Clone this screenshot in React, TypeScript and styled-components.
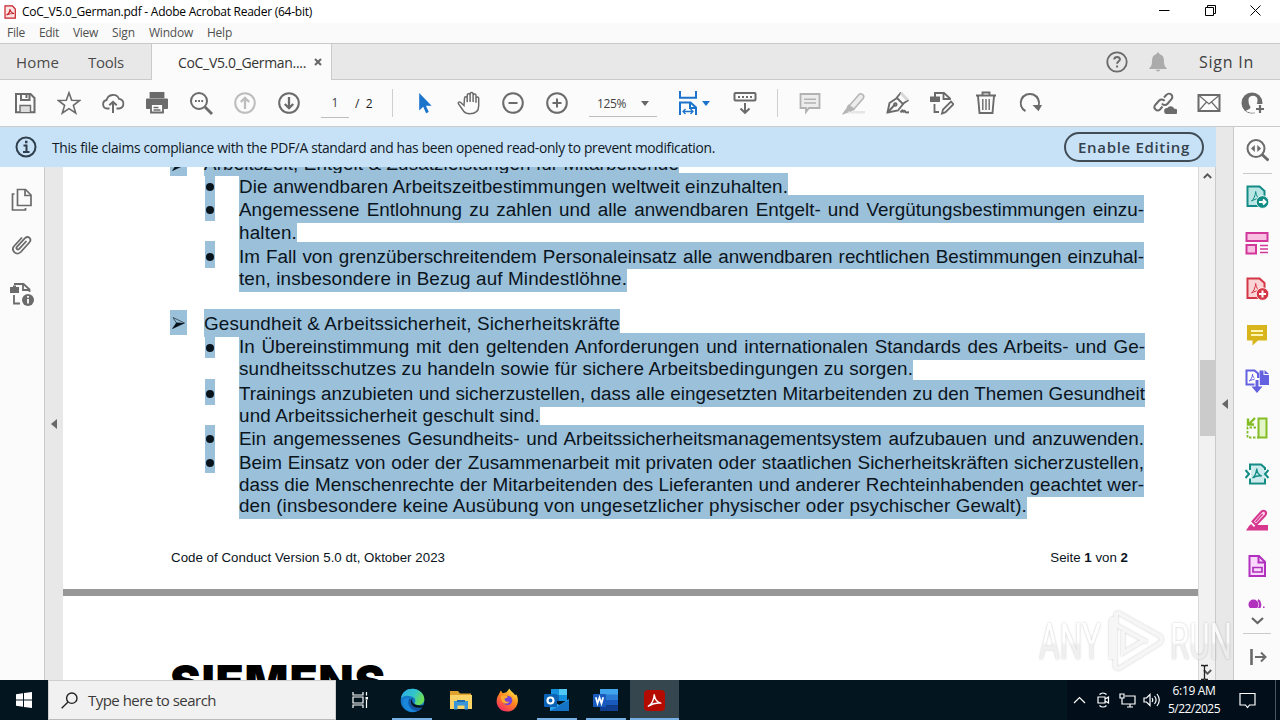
import React, { useLayoutEffect, useRef, useState } from 'react';
import styled, { createGlobalStyle } from 'styled-components';

type FitProps = { width: number; by?: 'letter' | 'word'; children: string };

function Fit({ width, by = 'letter', children }: FitProps) {
  const ref = useRef<HTMLSpanElement>(null);
  const [gap, setGap] = useState(0);

  useLayoutEffect(() => {
    const natural = ref.current!.getBoundingClientRect().width;
    const count = by === 'word' ? children.split(' ').length - 1 : children.length;
    setGap((width - natural) / Math.max(count, 1));
  }, []);

  return (
    <FitBox $width={width}>
      <span ref={ref} style={by === 'word' ? { wordSpacing: gap } : { letterSpacing: gap }}>
        {children}
      </span>
    </FitBox>
  );
}

const menus: [string, number][] = [
  ['File', 18],
  ['Edit', 20],
  ['View', 25],
  ['Sign', 23],
  ['Window', 44],
  ['Help', 25],
];

type Line = {
  text: string;
  width: number;
  height: number;
  pad: number;
  bullet?: [number, number, number];
  justify?: boolean;
};

// bullet: offset of the mark, its height, offset of the dot inside it
const workingTime: Line[] = [
  { text: 'Die anwendbaren Arbeitszeitbestimmungen weltweit einzuhalten.', width: 549, height: 22, pad: 3, bullet: [3, 23, 7] },
  { text: 'Angemessene Entlohnung zu zahlen und alle anwendbaren Entgelt- und Vergütungsbestimmungen einzu-', width: 905, height: 28, pad: 4, bullet: [0, 26, 11], justify: true },
  { text: 'halten.', width: 58, height: 19, pad: -1 },
  { text: 'Im Fall von grenzüberschreitendem Personaleinsatz alle anwendbaren rechtlichen Bestimmungen einzuhal-', width: 905, height: 27, pad: 4, bullet: [-1, 27, 12], justify: true },
  { text: 'ten, insbesondere in Bezug auf Mindestlöhne.', width: 388, height: 23, pad: -1 },
];

const safety: Line[] = [
  { text: 'In Übereinstimmung mit den geltenden Anforderungen und internationalen Standards des Arbeits- und Ge-', width: 906, height: 27, pad: 3, bullet: [4, 21, 7], justify: true },
  { text: 'sundheitsschutzes zu handeln sowie für sichere Arbeitsbedingungen zu sorgen.', width: 674, height: 20, pad: -2 },
  { text: 'Trainings anzubieten und sicherzustellen, dass alle eingesetzten Mitarbeitenden zu den Themen Gesundheit', width: 906, height: 27, pad: 3, bullet: [-1, 26, 11], justify: true },
  { text: 'und Arbeitssicherheit geschult sind.', width: 301, height: 18, pad: -2 },
  { text: 'Ein angemessenes Gesundheits- und Arbeitssicherheitsmanagementsystem aufzubauen und anzuwenden.', width: 905, height: 27, pad: 3, bullet: [0, 27, 10], justify: true },
  { text: 'Beim Einsatz von oder der Zusammenarbeit mit privaten oder staatlichen Sicherheitskräften sicherzustellen,', width: 905, height: 22, pad: 0, bullet: [0, 21, 7], justify: true },
  { text: 'dass die Menschenrechte der Mitarbeitenden des Lieferanten und anderer Rechteinhabenden geachtet wer-', width: 905, height: 23, pad: 0, justify: true },
  { text: 'den (insbesondere keine Ausübung von ungesetzlicher physischer oder psychischer Gewalt).', width: 788, height: 22, pad: -2 },
];

function Lines({ lines }: { lines: Line[] }) {
  return (
    <>
      {lines.map((line) => (
        <LineRow key={line.text} $height={line.height}>
          <BulletCell>
            {line.bullet && (
              <Bullet $shift={line.bullet[0]} $height={line.bullet[1]} $dot={line.bullet[2]}>
                <i />
              </Bullet>
            )}
          </BulletCell>
          <Marked $pad={line.pad}>
            <Fit width={line.width} by={line.justify ? 'word' : 'letter'}>
              {line.text}
            </Fit>
          </Marked>
        </LineRow>
      ))}
    </>
  );
}

const Arrow = () => (
  <svg width="17" height="25" viewBox="0 0 17 25">
    <path d="M3 7.5 14.5 13 2.5 18.5 6.5 13Z" fill="none" stroke="#1d2b35" strokeWidth=".7" />
    <path d="M6.5 12.6 14.5 13 2.5 18.7Z" fill="#06121c" />
  </svg>
);

type IconProps = { children: React.ReactNode; size?: number; color?: string; width?: number };

function Icon({ children, size = 24, color = '#6b6b6b', width = 1.8 }: IconProps) {
  return (
    <svg width={size} height={size} viewBox="0 0 24 24" fill="none" stroke={color} strokeWidth={width}>
      {children}
    </svg>
  );
}

const mark = 'M6.500 16c2-1.500 4-5.500 4.200-9.500 .3 4 2 6.500 5 7.500-3-.7-6 .2-9.200 2Z';

const SaveIcon = () => (
  <Icon width={2}>
    <path d="M3 3h14.500L21.500 7v14.200H3Z" />
    <path d="M8 3v6h8.500V3" />
    <path d="M13.500 4v3" />
    <path d="M7 21v-6.500h10.500V21" fill="#ddd" strokeWidth="1.400" />
  </Icon>
);
const StarIcon = () => (
  <Icon width={1.6}>
    <path d="m12 1.800 2.700 7.400 8 .3-6.300 4.900 2.300 7.600L12 17.600 5.300 22l2.300-7.600L1.300 9.500l8-.3Z" />
  </Icon>
);
const CloudIcon = () => (
  <Icon>
    <path d="M8.500 17.500H6A4.300 4.300 0 0 1 5.600 9 6.600 6.600 0 0 1 18 7.800a4.900 4.900 0 0 1 .3 9.700h-2.800" />
    <path d="M12 22V11M8.300 14.300 12 10.800l3.700 3.500" strokeWidth="2" />
  </Icon>
);
const PrintIcon = () => (
  <Icon>
    <path d="M5.500 1.800h13v4.500h-13Z" fill="#6b6b6b" />
    <path d="M1.500 8h21v9.500h-4V14h-13v3.500h-4Z" fill="#6b6b6b" strokeWidth="1" />
    <path d="M6 14v7.500h12V14" fill="#fff" />
    <path d="M8.500 16.500h5M8.500 19h7" strokeWidth="1.300" />
  </Icon>
);
const FindIcon = () => (
  <Icon width={2}>
    <circle cx="10" cy="10" r="8" />
    <path d="m16 16 7 7" strokeWidth="2.800" />
    <path d="M6 10h1.800M9.200 10H11M12.300 10h1.800" strokeWidth="2" />
  </Icon>
);
const UpIcon = () => (
  <Icon color="#bdbdbd" width={2}>
    <circle cx="12" cy="12" r="9.800" />
    <path d="M12 18V7M7.800 11 12 6.800l4.200 4.200" strokeWidth="2.300" />
  </Icon>
);
const DownIcon = () => (
  <Icon width={2}>
    <circle cx="12" cy="12" r="9.800" />
    <path d="M12 6v11M7.800 13l4.200 4.200 4.200-4.200" strokeWidth="2.300" />
  </Icon>
);
const PointerIcon = () => (
  <Icon>
    <path d="M6.200 2v17.500l4-3.800 2.900 6.500 2.700-1.200-2.900-6.300h5.700Z" fill="#1b73cc" stroke="none" />
  </Icon>
);
const HandIcon = () => (
  <Icon width={1.5}>
    <path d="M7 14.500 3.500 11.300c-1.500-1-2.800.5-1.800 1.800l5 7.200c1.200 1.600 3 2.500 6 2.500 6 0 9-3 9-8V7.300c0-1.900-2.700-1.900-2.700 0v4.500V4.500c0-2-2.900-2-2.900 0V11 3c0-2-3-2-3 0v8V4.300c0-2-2.900-2-2.900 0v7V7.200c0-2-2.700-2-2.700 0Z" />
  </Icon>
);
const MinusIcon = () => (
  <Icon width={2}>
    <circle cx="12" cy="12" r="9.800" />
    <path d="M7.500 12h9" strokeWidth="2" />
  </Icon>
);
const PlusIcon = () => (
  <Icon width={2}>
    <circle cx="12" cy="12" r="9.800" />
    <path d="M7.500 12h9M12 7.500v9" strokeWidth="2" />
  </Icon>
);
const FitPageIcon = () => (
  <Icon color="#1b73cc" width={2}>
    <path d="M4 0v6.800h16V0" />
    <path d="M4 24V11.500h10.500L20 16.500V24M14 11.500v5.500h6" />
    <path d="M7 20.500h10M9.500 18 7 20.500 9.500 23M14.500 18l2.500 2.500-2.500 2.500" strokeWidth="1.300" />
  </Icon>
);
const ScrollIcon = () => (
  <Icon width={2}>
    <rect x="1.500" y="2" width="21" height="7.500" rx="1" />
    <path d="M5 6h14" strokeDasharray="2 2" strokeWidth="2" />
    <path d="M12 12v9.500M7.500 17.500l4.500 4.300 4.500-4.300" strokeWidth="2" />
  </Icon>
);
const CommentIcon = () => (
  <Icon color="#b2b2b2">
    <path d="M2.500 3h19v14H11l-3 4v-4H2.500Z" fill="#ececec" />
    <path d="M6 8.300h12M6 12h12" strokeWidth="1.400" />
  </Icon>
);
const HighlightIcon = () => (
  <Icon color="#b5b5b5" width={1.500}>
    <path d="M12 20h11v2.500H5Z" fill="#e6e6e6" stroke="none" />
    <path d="m7 15 10-11.500c1.500-2 6 .8 4.500 3.500L12 18Z" fill="#ececec" />
    <path d="m6.500 14.500 5 4-3 1.500-4.500-.5Z" fill="#b5b5b5" />
    <path d="m1.500 22.500 4-1.500-2-1.500Z" fill="#b5b5b5" />
  </Icon>
);
const PenIcon = () => (
  <Icon width={1.900}>
    <path d="M1.500 21.500 3.500 12l7.500-5 6 6-5 6.500Z" />
    <path d="m1.500 21.500 7-7.500M10.500 7l4.500-5.500M16.500 13l6-4" strokeWidth="1.900" />
    <path d="m15 2 6.500 7" stroke="#d8d8d8" strokeWidth="3" />
    <circle cx="9.300" cy="13.500" r="1.300" />
    <path d="M14.500 21.500c1.500-2 2-3 2.500-1.200s1.500-1.800 2 0 1 1 4 1" strokeWidth="2" />
  </Icon>
);
const EditPageIcon = () => (
  <Icon width={1.800}>
    <path d="M0 5.500h10v5.500H0ZM4 3h2v2.500H4Z" fill="#6b6b6b" stroke="none" />
    <path d="M4 2h10l6 5.500V9M13.500 2v6H20M4.500 13v8H9" />
    <path d="m12 22.500 1-4 8-8 2.500 2.700-8 8Z" />
  </Icon>
);
const TrashIcon = () => (
  <Icon width={1.900}>
    <path d="M2 4.500h20M8.500 4V1.500h7V4M4 5l1.500 17h13L20 5" />
    <path d="M8.800 8v11M12 8v11M15.200 8v11" strokeWidth="1.400" />
  </Icon>
);
const RotateIcon = () => (
  <Icon width={2}>
    <path d="M7.500 20.200A9.200 9.200 0 1 1 20.600 15" />
    <path d="M14.500 14H24l-3.500 6.200Z" fill="#6b6b6b" stroke="none" />
  </Icon>
);
const LinkIcon = () => (
  <Icon width={2}>
    <path d="m9.500 15.500-2.500 3a3.300 3.300 0 0 1-4.800-4.500l4-4.500a3.300 3.300 0 0 1 5.300.500" />
    <path d="M9 12.500a3.300 3.300 0 0 0 5.300.5l4.200-4.800a3.300 3.300 0 0 0-5-4.400L11 6.500" />
    <path d="M14 23a3 3 0 0 1 .3-6 4 4 0 0 1 7.200 1 2.600 2.600 0 0 1 1.500 5Z" fill="#6b6b6b" stroke="none" />
  </Icon>
);
const MailIcon = () => (
  <Icon width={1.600}>
    <path d="M1.500 4h21v16h-21Z" strokeWidth="2" />
    <path d="m2 4.500 10 8.500L22 4.500M2 19.500l7.500-8.500M22 19.500 14.500 11" strokeWidth="1.200" />
  </Icon>
);
const UserIcon = () => (
  <Icon>
    <circle cx="11" cy="12" r="10.500" fill="#6b6b6b" stroke="none" />
    <path d="M7.500 8.500c.3-5 8.700-5 9 0 .2 4-1.300 5.500-2 6.500 0 1.500 1 2.500 2.500 3l-3 3.500c-3 .8-7 0-9-1.800 2-1.200 4.500-1.700 4.500-3.700-1-1.500-2.200-3.500-2-7.500Z" fill="#fbfbfb" stroke="none" />
    <path d="M14 13h10v11H14Z" fill="#fbfbfb" stroke="none" />
    <path d="M19 14v8M15 18h8" strokeWidth="2.200" />
  </Icon>
);

const pdfPage = 'M2.500 1.500h12L19.500 6v15h-17Z';

const ZoomToolIcon = () => (
  <Icon width={2}>
    <circle cx="11" cy="10.500" r="8.500" />
    <path d="m17 16.500 6.500 6" strokeWidth="3" />
    <path d="M9.800 7v7L6 10.500ZM12.300 7v7l3.800-3.500Z" fill="#6b6b6b" stroke="none" />
  </Icon>
);
const ExportIcon = () => (
  <Icon color="#128c84" width={2}>
    <path d={pdfPage} fill="#b9e5e5" />
    <path d={mark} strokeWidth="1" />
    <circle cx="17.500" cy="17" r="6.300" fill="#128c84" stroke="#fff" strokeWidth=".8" />
    <path d="M14 17h6.500M18 14.500l2.500 2.500-2.500 2.500" stroke="#fff" />
  </Icon>
);
const OrganizeIcon = () => (
  <Icon color="#d2379b" width={2}>
    <path d="M1.500 2h21v8h-21ZM1.500 14h9.500v8.500H1.500Z" fill="#f9bfe1" />
    <path d="M15 14.500h8M15 18h8M15 21.500h8" strokeWidth="1.300" />
  </Icon>
);
const CreateIcon = () => (
  <Icon color="#d53645" width={2}>
    <path d={pdfPage} fill="#fbd3d5" />
    <path d={mark} strokeWidth="1" />
    <circle cx="17.500" cy="17" r="6.300" fill="#d53645" stroke="#fff" strokeWidth=".8" />
    <path d="M14 17h7M17.500 13.500v7" stroke="#fff" />
  </Icon>
);
const NoteIcon = () => (
  <Icon>
    <path d="M2 2h20v15.500h-9l-5.500 5v-5H2Z" fill="#d9b51c" stroke="none" />
    <path d="M6 8h12M6 12h12" stroke="#fff4b0" strokeWidth="2" />
  </Icon>
);
const CombineIcon = () => (
  <Icon color="#6361e0" width={2}>
    <path d="M1.500 1.500h8L13 4.500v11H1.500Z" fill="#fff" />
    <path d="M4 12c2-1 3.500-4 3.500-7 0 3 1.500 4.500 4 5.500-3-.2-5 .2-7.500 1.500" strokeWidth="1" />
    <path d="M14.500 1.500h4v4.500H24v10h-9.500ZM19.500 1 24 5h-4.500Z" fill="#6361e0" stroke="none" />
    <path d="M12 9v10" stroke="#fff" strokeWidth="5" />
    <path d="M12 11v8" strokeWidth="3" />
    <path d="M6.500 17.500h11L12 24Z" fill="#6361e0" stroke="none" />
  </Icon>
);
const CompareIcon = () => (
  <Icon color="#83bd25">
    <path d="M13.500 2.500h8v19h-8Z" fill="#e3f4c7" strokeWidth="2" />
    <path d="M11 11.500H2.500v10h11" strokeDasharray="2.500 1.500" />
    <path d="m10 2-6 6M3 2.500v6h6" strokeWidth="2.400" />
  </Icon>
);
const CompressIcon = () => (
  <Icon color="#128c84">
    <path d="M6 3h10l4 4v13H6Z" fill="#cdebed" stroke="none" />
    <path d="M5 8V2.500h11L20 6v2M5 16.500v5h15v-5" strokeWidth="2" />
    <path d="m.5 8 3.500 4-3.500 4M23.500 8 20 12l3.500 4" strokeWidth="2" />
    <path d={mark} strokeWidth="1.400" transform="translate(1 0)" />
  </Icon>
);
const RedactIcon = () => (
  <Icon color="#d83790">
    <path d="M11 17h12v5.500H1l3-4.500 2-2 3 3Z" fill="#d83790" stroke="none" />
    <path d="m7.500 13.500 9-10c2.500-2 6 .5 4 3.500l-9.500 10Z" fill="#f9d3e8" strokeWidth="2" />
    <path d="m10.500 14 7-8" strokeWidth="1.300" />
  </Icon>
);
const FormIcon = () => (
  <Icon color="#b130bd" width={2}>
    <path d="M4.500 2h9.500l6 6v14H4.500Z" fill="#f8d9fb" />
    <path d="M13.500 2v6.500H20" />
    <path d="M8 13.500h9v4.500H8Z" strokeWidth="1.700" />
  </Icon>
);
const MoreToolIcon = () => (
  <Icon color="#b130bd">
    <circle cx="8.500" cy="7.500" r="5" fill="#b130bd" stroke="none" />
    <path d="M13 3c3 2 3 7 0 9" strokeWidth="2.200" />
    <path d="M18 10.300h1.500" />
  </Icon>
);

const tools = [ExportIcon, OrganizeIcon, CreateIcon, NoteIcon, CombineIcon, CompareIcon, CompressIcon, RedactIcon, FormIcon];

const PagesIcon = () => (
  <Icon width={1.700}>
    <path d="M7.500 1.500h8L21 7v10.500H7.500Z" />
    <path d="M15 1.500v6h6M4.500 6H2.500v16h13v-2" />
  </Icon>
);
const ClipIcon = () => (
  <Icon width={1.800}>
    <path d="m16.500 6-7.300 7.800c-1.600 1.600-3.700-.4-2.300-2L15 3.200c3.300-3 7.300 1 4.300 4.300L10.800 17c-4 4.300-10.500-1.500-6.600-6L12 2.500" />
  </Icon>
);
const InfoPageIcon = () => (
  <Icon width={1.800}>
    <path d="M0 5h9v6H0ZM3 3.500h3v2H3Z" fill="#6b6b6b" stroke="none" />
    <path d="M4 2h9.500l6 5.500V10M13 2v6h6.500M4 13v8.500h6" />
    <circle cx="18" cy="18" r="6" fill="#6b6b6b" stroke="none" />
    <path d="M18 17v4.500M18 14v1.800" stroke="#fff" />
  </Icon>
);

const AcrobatMark = ({ size }: { size: number }) => (
  <svg width={size} height={size} viewBox="0 0 24 24">
    <rect width="24" height="24" rx="4.500" fill="#b30b00" />
    <path d="M5 18.500c4-2 6.500-8 6.700-13 .8 5.500 3 8.500 7.500 9.500-5-.8-9 .3-14.200 3.500Z" fill="none" stroke="#fff" strokeWidth="1.700" strokeLinejoin="round" />
  </svg>
);

const EdgeIcon = () => (
  <svg width="25" height="25" viewBox="0 0 26 26">
    <defs>
      <linearGradient id="edgeTop" x1="0" y1="0" x2="1" y2=".4">
        <stop offset="0" stopColor="#2aa9e8" />
        <stop offset=".6" stopColor="#33c5c8" />
        <stop offset="1" stopColor="#6ade58" />
      </linearGradient>
    </defs>
    <circle cx="13" cy="13" r="12.300" fill="#1579c9" />
    <path d="M1 11C2 4 7 .7 13 .7c7 0 12.300 5.300 12.300 11 0 4-3 6-6.500 6-3 0-4-1.300-3.300-2.700 1-1.500.5-5-3-6C8 7.500 3 8 1 11Z" fill="url(#edgeTop)" />
    <path d="M9 11c-2 6 1 12.500 9 13C12 27 3 23 3 15c0-3 3-5 6-4Z" fill="#1a86dc" />
    <path d="M12 11.500c-2 4 1 9 11.500 8-1 2-3 4-5 4.500-8-.5-11-7-9-12.500Z" fill="#1557a6" />
    <path d="M13 10.500c-1.500 5 1.500 8.500 12 7.500l.5 2-2.500.3c-4 .7-8 .2-10.200-2.300S11.300 12.500 13 10.500Z" fill="#03161f" />
  </svg>
);
const FolderIcon = () => (
  <svg width="22" height="20" viewBox="0 0 22 20">
    <path d="M0 1h8l2 2.500h11V8H0Z" fill="#e0a42e" />
    <path d="M0 5h22v14H0Z" fill="#fbd366" />
    <path d="M4 11h14v8.500h-3.500v-4h-7v4H4Z" fill="#3a96d9" />
    <path d="M7 10h8v2H7Z" fill="#1d6fb0" />
  </svg>
);
const FirefoxIcon = () => (
  <svg width="23" height="24" viewBox="0 0 24 24">
    <defs>
      <linearGradient id="fox" x1=".8" y1="0" x2=".2" y2="1">
        <stop offset="0" stopColor="#fff04a" />
        <stop offset=".45" stopColor="#ff8a1d" />
        <stop offset="1" stopColor="#f52667" />
      </linearGradient>
    </defs>
    <path d="M3 6 5 2l2 3 4-1 3-4c1 3 4 4 6 7l1-1c5 8-.5 18-9 18C1 24-2 13 3 6Z" fill="url(#fox)" />
    <circle cx="12" cy="12.500" r="5" fill="#7a42d8" />
    <path d="M5 8c3-2 5 0 7 0 1 1-1 2-3 2.500 0 3 2 4 5 3-2 4-9 3-9-5.500Z" fill="#ffab2e" />
  </svg>
);
const OutlookIcon = () => (
  <svg width="25" height="22" viewBox="0 0 25 22">
    <path d="M7 0h16v12H7Z" fill="#1490df" />
    <path d="M15 0h8v6h-8Z" fill="#50c8f5" />
    <path d="M7 6h8v6H7Z" fill="#0f66b4" />
    <path d="M6 11 15.500 16 25 10v12H6Z" fill="#2aa3ea" />
    <path d="m6 22 19-11v11Z" fill="#1473c4" />
    <rect y="5" width="13" height="13" rx="1" fill="#0a62b5" />
    <circle cx="6.500" cy="11.500" r="3" fill="none" stroke="#fff" strokeWidth="2.100" />
  </svg>
);
const WordIcon = () => (
  <svg width="25" height="22" viewBox="0 0 25 22">
    <path d="M7 0h18v6H7Z" fill="#41a5ee" />
    <path d="M7 5.500h18V11H7Z" fill="#2b7cd3" />
    <path d="M7 11h18v5.500H7Z" fill="#185abd" />
    <path d="M7 16.500h18V22H7Z" fill="#103f91" />
    <rect y="5" width="13" height="13" rx="1" fill="#185abd" />
    <path d="m2.800 8.300 1.700 6.200 2-6 2 6 1.700-6.200" fill="none" stroke="#fff" strokeWidth="1.700" />
  </svg>
);

export default function App() {
  return (
    <Screen>
      <GlobalStyle />
      <TitleBar>
        <svg width="12" height="14" viewBox="0 0 12 14">
          <path d="M1 .8h7.500L11.300 4v9.200H1Z" fill="#fbe4e4" stroke="#c8202a" strokeWidth="1.200" />
          <path d="M2.500 10c2-1 3.500-3.500 3.500-6 .3 2.500 1.500 4 4 4.500-3 0-5 .3-7.500 1.500Z" fill="none" stroke="#c8202a" strokeWidth="1.200" />
        </svg>
        <Fit width={290}>CoC_V5.0_German.pdf - Adobe Acrobat Reader (64-bit)</Fit>
        <WindowButtons>
          <svg width="11" height="11" viewBox="0 0 11 11"><path d="M0 5.500h10.500" /></svg>
          <svg width="11" height="11" viewBox="0 0 11 11"><path d="M.5 2.500h8v8h-8ZM2.500 2.500v-2h8v8h-2" /></svg>
          <svg width="11" height="11" viewBox="0 0 11 11"><path d="m.5.5 10 10M10.500.5l-10 10" /></svg>
        </WindowButtons>
      </TitleBar>
      <MenuBar>
        {menus.map(([name, width]) => (
          <Fit key={name} width={width}>{name}</Fit>
        ))}
      </MenuBar>
      <TabBar>
        <PlainTabs>
          <Fit width={43}>Home</Fit>
          <Fit width={36}>Tools</Fit>
        </PlainTabs>
        <ActiveTab>
          <Fit width={128}>CoC_V5.0_German....</Fit>
          <svg width="8" height="8" viewBox="0 0 8 8"><path d="m1 1 6 6M7 1 1 7" stroke="#666" strokeWidth="2" /></svg>
        </ActiveTab>
        <Account>
          <Icon width={1.800}>
            <circle cx="12" cy="12" r="9.700" />
            <path d="M9.200 9.500c.2-3.300 5.800-3.200 5.700-.1 0 1.800-2.800 2-2.800 4.300M12.100 15.500v2" strokeWidth="2" />
          </Icon>
          <Icon size={22}>
            <path d="M12 1.500c1 0 1.500.6 1.500 1.800 3.500 1 5 3.500 5 7 0 5 1 6.500 3 8.500v.7h-19v-.7c2-2 3-3.500 3-8.500 0-3.500 1.500-6 5-7 0-1.200.5-1.800 1.500-1.800ZM9.500 20.500h5c-.5 2.500-4.500 2.500-5 0Z" fill="#ababab" stroke="none" />
          </Icon>
          <Fit width={55}>Sign In</Fit>
        </Account>
      </TabBar>
      <Toolbar>
        <Tool><SaveIcon /></Tool>
        <Tool><StarIcon /></Tool>
        <Tool><CloudIcon /></Tool>
        <Tool><PrintIcon /></Tool>
        <Tool><FindIcon /></Tool>
        <Tool><UpIcon /></Tool>
        <Tool><DownIcon /></Tool>
        <PageInput>1</PageInput>
        <PageTotal>/&nbsp; 2</PageTotal>
        <Divider $before={19} $after={10} />
        <Tool><PointerIcon /></Tool>
        <Tool><HandIcon /></Tool>
        <Tool><MinusIcon /></Tool>
        <Tool><PlusIcon /></Tool>
        <ZoomSelect>
          <Fit width={29}>125%</Fit>
          <Caret $color="#666" />
        </ZoomSelect>
        <FitTool>
          <FitPageIcon />
          <Caret $color="#1b73cc" />
        </FitTool>
        <Tool><ScrollIcon /></Tool>
        <Divider $before={10} $after={10} />
        <Tool><CommentIcon /></Tool>
        <Tool><HighlightIcon /></Tool>
        <Tool><PenIcon /></Tool>
        <Tool><EditPageIcon /></Tool>
        <Tool><TrashIcon /></Tool>
        <Tool><RotateIcon /></Tool>
        <ToolbarEnd>
          <Tool><LinkIcon /></Tool>
          <Tool><MailIcon /></Tool>
          <Tool><UserIcon /></Tool>
        </ToolbarEnd>
      </Toolbar>
      <Body>
        <Main>
          <Notice>
            <Icon color="#2f3e4a" width={2}>
              <circle cx="12" cy="12" r="9.500" />
              <path d="M9.500 10.500h3v6M9 17h6.500" />
              <path d="M11 7h2.500" strokeWidth="2.500" />
            </Icon>
            <Fit width={663}>This file claims compliance with the PDF/A standard and has been opened read-only to prevent modification.</Fit>
            <EnableButton><Fit width={112}>Enable Editing</Fit></EnableButton>
          </Notice>
          <Viewer>
            <SideRail>
              <PagesIcon />
              <ClipIcon />
              <InfoPageIcon />
            </SideRail>
            <LeftGutter><Collapse /></LeftGutter>
            <Pages>
              <FirstPage>
                <HeadingRow $height={22}>
                  <ArrowMark $height={24}><Arrow /></ArrowMark>
                  <HeadingMark $height={25} $pad={2}>
                    <Fit width={475}>Arbeitszeit, Entgelt &amp; Zusatzleistungen für Mitarbeitende</Fit>
                  </HeadingMark>
                </HeadingRow>
                <Lines lines={workingTime} />
                <Blank />
                <HeadingRow $height={24}>
                  <ArrowMark $height={25}><Arrow /></ArrowMark>
                  <HeadingMark $height={28} $pad={4}>
                    <Fit width={416}>Gesundheit &amp; Arbeitssicherheit, Sicherheitskräfte</Fit>
                  </HeadingMark>
                </HeadingRow>
                <Lines lines={safety} />
                <PageFooter>
                  <Fit width={274}>Code of Conduct Version 5.0 dt, Oktober 2023</Fit>
                  <span>Seite <b>1</b> von <b>2</b></span>
                </PageFooter>
              </FirstPage>
              <NextPage>
                <Logo><Fit width={216}>SIEMENS</Fit></Logo>
              </NextPage>
            </Pages>
            <ScrollBar>
              <svg width="9" height="6" viewBox="0 0 9 6"><path d="m.8 5 3.700-3.700L8.200 5" fill="none" stroke="#555" strokeWidth="1.800" /></svg>
              <Thumb />
              <svg width="9" height="6" viewBox="0 0 9 6"><path d="m.8 1 3.700 3.700L8.200 1" fill="none" stroke="#555" strokeWidth="1.800" /></svg>
            </ScrollBar>
          </Viewer>
        </Main>
        <RightGutter><Collapse /></RightGutter>
        <ToolRail>
          <RailTop><ZoomToolIcon /></RailTop>
          {tools.map((ToolIcon, idx) => (
            <RailItem key={idx}><ToolIcon /></RailItem>
          ))}
          <RailClipped><MoreToolIcon /></RailClipped>
          <RailMore>
            <svg width="13" height="8" viewBox="0 0 13 8"><path d="m1 1 5.500 5L12 1" fill="none" stroke="#666" strokeWidth="2.200" /></svg>
          </RailMore>
          <Icon>
            <path d="M6.500 4v16" strokeWidth="2.600" />
            <path d="M10 12h10M16 7.500l4.500 4.500-4.500 4.500" strokeWidth="2" />
          </Icon>
        </ToolRail>
      </Body>
      <Taskbar>
        <StartButton>
          <svg width="16" height="16" viewBox="0 0 16 16">
            <path d="M0 2.200 7 1.200v6.300H0ZM8 1l8-1v7.500H8ZM0 8.500h7v6.300l-7-1ZM8 8.500h8V16l-8-1Z" fill="#fff" />
          </svg>
        </StartButton>
        <Search>
          <svg width="17" height="17" viewBox="0 0 17 17" fill="none" stroke="#222" strokeWidth="1.400">
            <circle cx="10.800" cy="6.200" r="5.200" />
            <path d="M7 10 .7 16.300" />
          </svg>
          <Fit width={128}>Type here to search</Fit>
        </Search>
        <TaskItem>
          <svg width="17" height="16" viewBox="0 0 17 16" fill="none" stroke="#fff" strokeWidth="1.200">
            <path d="M1 0v3h10V0M1 16v-3h10v3M1 5h10v6H1ZM14.500 0v3.500M14.500 8v8" />
            <path d="M13.500 5h2.500v2.500h-2.500Z" fill="#fff" stroke="none" />
          </svg>
        </TaskItem>
        <TaskItem $open $wide><EdgeIcon /></TaskItem>
        <TaskItem $tight><FolderIcon /></TaskItem>
        <TaskItem><FirefoxIcon /></TaskItem>
        <TaskItem $open><OutlookIcon /></TaskItem>
        <TaskItem $open><WordIcon /></TaskItem>
        <TaskItem $open $active><AcrobatMark size={21} /></TaskItem>
        <Tray>
          <TrayIcon>
            <svg width="13" height="8" viewBox="0 0 13 8"><path d="m1 7 5.500-5.500L12 7" /></svg>
          </TrayIcon>
          <TrayIcon>
            <svg width="13" height="16" viewBox="0 0 13 16"><path d="M2.500 2.500c2-2 5-2 7 0M2.500 13.500c2 2 5 2 7 0M1 5h7v6H1ZM8 7l3.500-2v6L8 9" /></svg>
          </TrayIcon>
          <TrayIcon>
            <svg width="17" height="15" viewBox="0 0 17 15"><path d="M6 3h10v8H5M8 14h6M11 11v3M1 1h4v4H1ZM3 5v6h2" /></svg>
          </TrayIcon>
          <TrayIcon>
            <svg width="17" height="14" viewBox="0 0 17 14"><path d="M1 5h2.500L7 1.500v11L3.500 9H1ZM9 5c1 1.300 1 2.700 0 4M11.500 3c2 2.500 2 5.500 0 8M14 1c2.800 3.700 2.800 8.300 0 12" /></svg>
          </TrayIcon>
          <Clock>
            <Fit width={43}>6:19 AM</Fit>
            <Fit width={52}>5/22/2025</Fit>
          </Clock>
          <Notifications>
            <svg width="17" height="17" viewBox="0 0 17 17"><path d="M1 1.500h15v11.500h-5.500L8.500 15.500 6.500 13H1Z" /></svg>
          </Notifications>
        </Tray>
      </Taskbar>
      <Watermark width="200" height="66" viewBox="0 0 200 66">
        <defs>
          <linearGradient id="wm" x1="0" y1="0" x2="0" y2="1">
            <stop offset=".5" stopColor="#fff" />
            <stop offset=".55" stopColor="#ececec" />
          </linearGradient>
        </defs>
        <text x="3" y="51" textLength="62" lengthAdjust="spacingAndGlyphs">ANY</text>
        <text x="134" y="51" textLength="62" lengthAdjust="spacingAndGlyphs">RUN</text>
        <path d="M75 51V14c0-3 1-4 4-3v41M81 4l43 24c2 2 2 5 0 7L84 60c-3 1-5 0-5-3V48M80 4v13l31 17M87 23v22l21-13" />
      </Watermark>
      <TextCursor width="9" height="17" viewBox="0 0 9 17">
        <path d="M1 1.500h2.500l1 1 1-1H8M4.500 2v13M1 15.500h2.500l1-1 1 1H8" />
      </TextCursor>
    </Screen>
  );
}

const GlobalStyle = createGlobalStyle`
  body {
    margin: 0;
    overflow: hidden;
  }
`;

const Screen = styled.div`
  position: relative;
  display: flex;
  flex-direction: column;
  width: 1280px;
  height: 720px;
  overflow: hidden;
  font-family: 'Open Sans', 'Noto Sans', sans-serif;
  font-size: 12px;
  background: #fff;

  svg {
    display: block;
    flex-shrink: 0;
  }
`;

const FitBox = styled.span<{ $width: number }>`
  display: block;
  flex-shrink: 0;
  width: ${({ $width }) => $width}px;
  white-space: nowrap;
`;

const TitleBar = styled.header`
  display: flex;
  align-items: center;
  gap: 6px;
  height: 23px;
  padding-left: 4px;
  box-sizing: border-box;
  color: #000;
`;

const WindowButtons = styled.div`
  display: flex;
  gap: 34.5px;
  margin: 0 19px 2px auto;

  path {
    fill: none;
    stroke: #000;
    stroke-width: 1;
  }
`;

const MenuBar = styled.nav`
  display: flex;
  align-items: center;
  gap: 14px;
  height: 20px;
  padding: 0 0 1px 7px;
  box-sizing: border-box;
  background: #fafafa;
  color: #505050;
`;

const TabBar = styled.div`
  display: flex;
  height: 35px;
  background: #e8e8e8;
  border-top: 1px solid #cacaca;
  border-bottom: 1px solid #cacaca;
  color: #4b4b4b;
  font-size: 15px;
`;

const PlainTabs = styled.div`
  display: flex;
  align-items: center;
  gap: 29px;
  width: 151px;
  padding-left: 16px;
  box-sizing: border-box;
`;

const ActiveTab = styled.div`
  display: flex;
  align-items: center;
  gap: 8px;
  width: 181px;
  height: 36px;
  padding-left: 26px;
  box-sizing: border-box;
  background: #fbfbfb;
  border-left: 1px solid #cacaca;
  border-right: 1px solid #cacaca;
  color: #333;
  font-size: 14px;
`;

const Account = styled.div`
  display: flex;
  align-items: center;
  gap: 18px;
  margin-left: auto;
  padding-right: 26px;
  font-size: 16px;
  color: #3f3f3f;

  & > :last-child {
    margin-left: 12px;
  }
`;

const Toolbar = styled.div`
  display: flex;
  align-items: center;
  height: 46px;
  padding-left: 3px;
  background: #fbfbfb;
  border-bottom: 1px solid #cacaca;
`;

const Tool = styled.div`
  display: flex;
  justify-content: center;
  width: 44px;
`;

const PageInput = styled.div`
  width: 28px;
  height: 26px;
  margin: 2px 0 0 10px;
  border-bottom: 1px solid #bdbdbd;
  line-height: 24px;
  text-align: center;
  color: #444;
`;

const PageTotal = styled.div`
  width: 18px;
  margin-left: 6px;
  white-space: nowrap;
  color: #222;
`;

const Divider = styled.div<{ $before: number; $after: number }>`
  width: 1px;
  height: 28px;
  margin: 0 ${({ $after }) => $after}px 0 ${({ $before }) => $before}px;
  background: #cfcfcf;
`;

const ZoomSelect = styled.div`
  display: flex;
  align-items: center;
  gap: 15px;
  width: 60px;
  height: 26px;
  margin: 1px 0 0 10px;
  padding-left: 8px;
  border-bottom: 1px solid #bdbdbd;
  color: #444;
`;

const Caret = styled.i<{ $color: string }>`
  border: 4px solid transparent;
  border-top: 5px solid ${({ $color }) => $color};
  border-bottom: 0;
`;

const FitTool = styled.div`
  display: flex;
  align-items: center;
  gap: 2px;
  width: 47px;
  margin-left: 19px;
`;

const ToolbarEnd = styled.div`
  display: flex;
  margin-left: auto;
  padding-right: 5px;
`;

const Body = styled.div`
  display: flex;
  height: 553px;
`;

const Main = styled.main`
  display: flex;
  flex-direction: column;
  width: 1216px;
`;

const Notice = styled.div`
  display: flex;
  align-items: center;
  gap: 14px;
  height: 40px;
  padding: 0 12px 0 14px;
  background: #c7e2f7;
  color: #10181f;
  font-size: 13.8px;
`;

const EnableButton = styled.button`
  display: flex;
  align-items: center;
  height: 30px;
  margin-left: auto;
  padding: 0 12px;
  background: transparent;
  border: 2px solid #414c55;
  border-radius: 15px;
  color: #34414c;
  font: 600 15px 'Open Sans', sans-serif;
`;

const Viewer = styled.div`
  display: flex;
  height: 513px;
`;

const SideRail = styled.aside`
  display: flex;
  flex-direction: column;
  align-items: center;
  gap: 23px;
  width: 44px;
  padding-top: 21px;
  background: #fbfbfb;
  border-right: 1px solid #cacaca;
`;

const LeftGutter = styled.div`
  display: flex;
  align-items: center;
  justify-content: center;
  width: 18px;
  background: #e8e8e8;
`;

const Collapse = styled.i`
  border: 5px solid transparent;
  border-right: 6px solid #686868;
  border-left: 0;
`;

const Pages = styled.div`
  width: 1135px;
  overflow: hidden;
  background: #979797;
`;

const FirstPage = styled.section`
  height: 438px;
  margin-top: -16px;
  padding-left: 107px;
  background: #fff;
  color: #0a141c;
  font-family: 'Liberation Sans', Arial, sans-serif;
  font-size: 18.85px;
  line-height: 21px;
`;

const HeadingRow = styled.div<{ $height: number }>`
  display: flex;
  align-items: flex-start;
  gap: 17px;
  height: ${({ $height }) => $height}px;
`;

const ArrowMark = styled.div<{ $height: number }>`
  width: 17px;
  height: ${({ $height }) => $height}px;
  margin-top: 1px;
  background: #9bc0da;
`;

const HeadingMark = styled.div<{ $height: number; $pad: number }>`
  height: ${({ $height }) => $height}px;
  padding-top: ${({ $pad }) => $pad}px;
  box-sizing: border-box;
  background: #9bc0da;
`;

const LineRow = styled.div<{ $height: number }>`
  display: flex;
  height: ${({ $height }) => $height}px;
  margin-left: 35px;
`;

const BulletCell = styled.div`
  width: 10px;
  margin-right: 24px;
`;

const Bullet = styled.div<{ $shift: number; $height: number; $dot: number }>`
  height: ${({ $height }) => $height}px;
  margin-top: ${({ $shift }) => $shift}px;
  background: #9bc0da;
  overflow: hidden;

  i {
    display: block;
    width: 8px;
    height: 8px;
    margin: ${({ $dot }) => $dot}px 0 0 1px;
    border-radius: 50%;
    background: #0a141c;
  }
`;

const Marked = styled.div<{ $pad: number }>`
  background: #9bc0da;

  /* keeps descenders above the highlight of the following line */
  & > span {
    position: relative;
    z-index: 1;
    margin-top: ${({ $pad }) => $pad}px;
  }
`;

const Blank = styled.div`
  height: 17px;
`;

const PageFooter = styled.footer`
  display: flex;
  justify-content: space-between;
  margin: 28px 70px 0 1px;
  font-size: 13.3px;
`;

const NextPage = styled.section`
  height: 90px;
  margin-top: 7px;
  background: #fff;
`;

const Logo = styled.div`
  padding: 57px 0 0 107px;
  color: #000;
  font: 900 46px/56px Inter, 'Open Sans', sans-serif;
`;

const ScrollBar = styled.div`
  display: flex;
  flex-direction: column;
  align-items: center;
  width: 16px;
  padding-top: 6px;
  background: #f1f1f1;
  border-left: 1px solid #d8d8d8;
  border-right: 1px solid #cacaca;
`;

const Thumb = styled.div`
  width: 15px;
  height: 76px;
  margin: 181px 0 233px;
  background: #cbcbcb;
`;

const RightGutter = styled.div`
  display: flex;
  align-items: center;
  justify-content: center;
  width: 17px;
  background: #e8e8e8;
  border-right: 1px solid #cacaca;
`;

const ToolRail = styled.aside`
  display: flex;
  flex-direction: column;
  align-items: center;
  width: 46px;
  background: #fbfbfb;
`;

const RailTop = styled.div`
  width: 27px;
  height: 35px;
  padding: 11px 0 0 2px;
  border-bottom: 1px solid #cacaca;
`;

const RailItem = styled.div`
  display: flex;
  align-items: center;
  height: 46.1px;
`;

const RailClipped = styled.div`
  height: 9px;
  margin-top: 10px;
  overflow: hidden;

  svg {
    margin-top: -2px;
  }
`;

const RailMore = styled.div`
  display: flex;
  justify-content: center;
  width: 28px;
  height: 16px;
  margin-bottom: 11px;
  padding-top: 9px;
  border-bottom: 1px solid #cacaca;
`;

const Taskbar = styled.footer`
  display: flex;
  height: 40px;
  background: #03151f;
  color: #fff;
`;

const StartButton = styled.div`
  display: flex;
  align-items: center;
  justify-content: center;
  width: 48px;
`;

const Search = styled.div`
  display: flex;
  align-items: center;
  gap: 10px;
  width: 288px;
  padding-left: 12px;
  box-sizing: border-box;
  background: #f1f1f1;
  border: 1px solid #cfcfcf;
  border-bottom-color: #bbb;
  color: #3a3a3a;
  font-size: 15px;
`;

const TaskItem = styled.div<{ $open?: boolean; $active?: boolean; $wide?: boolean; $tight?: boolean }>`
  display: flex;
  align-items: center;
  justify-content: center;
  width: ${({ $wide, $tight }) => ($wide ? 54 : $tight ? 44 : 49)}px;
  background: ${({ $active }) => ($active ? '#36464f' : 'transparent')};
  background-image: ${({ $open }) => ($open ? 'linear-gradient(#76b0e4, #76b0e4)' : 'none')};
  background-repeat: no-repeat;
  background-position: bottom;
  background-size: ${({ $active }) => ($active ? '49px' : '40px')} 2px;
`;

const Tray = styled.div`
  display: flex;
  align-items: center;
  margin-left: auto;
  padding-right: 4px;
  background: #020f1b;

  path {
    fill: none;
    stroke: #fff;
    stroke-width: 1.2;
  }
`;

const TrayIcon = styled.div`
  display: flex;
  justify-content: center;
  width: 24px;
`;

const Clock = styled.div`
  display: flex;
  flex-direction: column;
  align-items: center;
  width: 62px;
  line-height: 18px;
`;

const Notifications = styled.div`
  display: flex;
  align-items: center;
  justify-content: center;
  width: 44px;
  height: 40px;
  padding-right: 6px;
  border-right: 1px solid #4a545d;
`;

const Watermark = styled.svg`
  position: absolute;
  left: 1036px;
  top: 608px;
  opacity: 0.75;
  filter: drop-shadow(0 0 1px rgba(0, 0, 0, 0.28));

  text {
    font: 400 50px Roboto, sans-serif;
    fill: url(#wm);
  }

  path {
    fill: none;
    stroke: #f4f4f4;
    stroke-width: 4;
  }
`;

const TextCursor = styled.svg`
  position: absolute;
  left: 1200px;
  top: 664px;

  path {
    fill: none;
    stroke: #222;
    stroke-width: 1.3;
  }
`;
